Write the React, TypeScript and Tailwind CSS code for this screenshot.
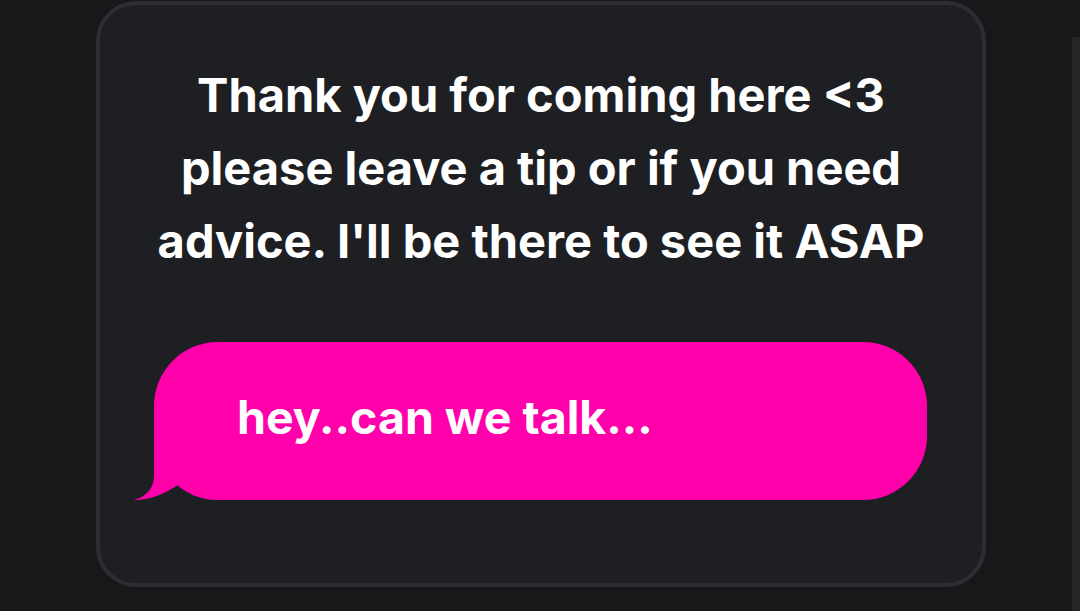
import React from 'react';

// little iMessage-style tail, sits over the bubble's bottom-left corner
const BubbleTail = () => (
  <svg
    className="absolute left-[-21px] bottom-0"
    width="45"
    height="64"
    viewBox="0 0 45 64"
    fill="#ff00aa"
  >
    <path d="M21 0 L21 40 C21 52 13 61 1 64 C16 64 30 59 44 49.5 L44 0 Z" />
  </svg>
);

const App = () => {
  return (
    <div
      className="relative w-[1080px] h-[611px] overflow-hidden bg-[#17181a]"
      style={{ fontFamily: 'Inter, "Noto Sans", sans-serif' }}
    >
      {/* scrollbar track on the right edge */}
      <div className="absolute right-0 top-[37px] bottom-0 w-[8px] bg-[#252628]" />

      <div className="pt-px pl-[96px]">
        <div className="w-[890px] h-[586px] rounded-[40px] border-[4px] border-[#2d2e33] bg-[#1e1f23] flex flex-col items-center">
          <p className="mt-[53px] text-center text-white font-bold text-[47px] leading-[73px]">
            Thank you for coming here &lt;3
            <br />
            please leave a tip or if you need
            <br />
            advice. I'll be there to see it ASAP
          </p>

          <div className="relative mt-[65px] w-[773px] h-[158px] ml-[-1px]">
            <div className="h-full rounded-[64px] bg-[#ff00aa] flex items-center pl-[83px]">
              <span className="text-white font-bold text-[46.5px] mt-[-6px]">
                hey..can we talk...
              </span>
            </div>
            <BubbleTail />
          </div>
        </div>
      </div>
    </div>
  );
};

export default App;
